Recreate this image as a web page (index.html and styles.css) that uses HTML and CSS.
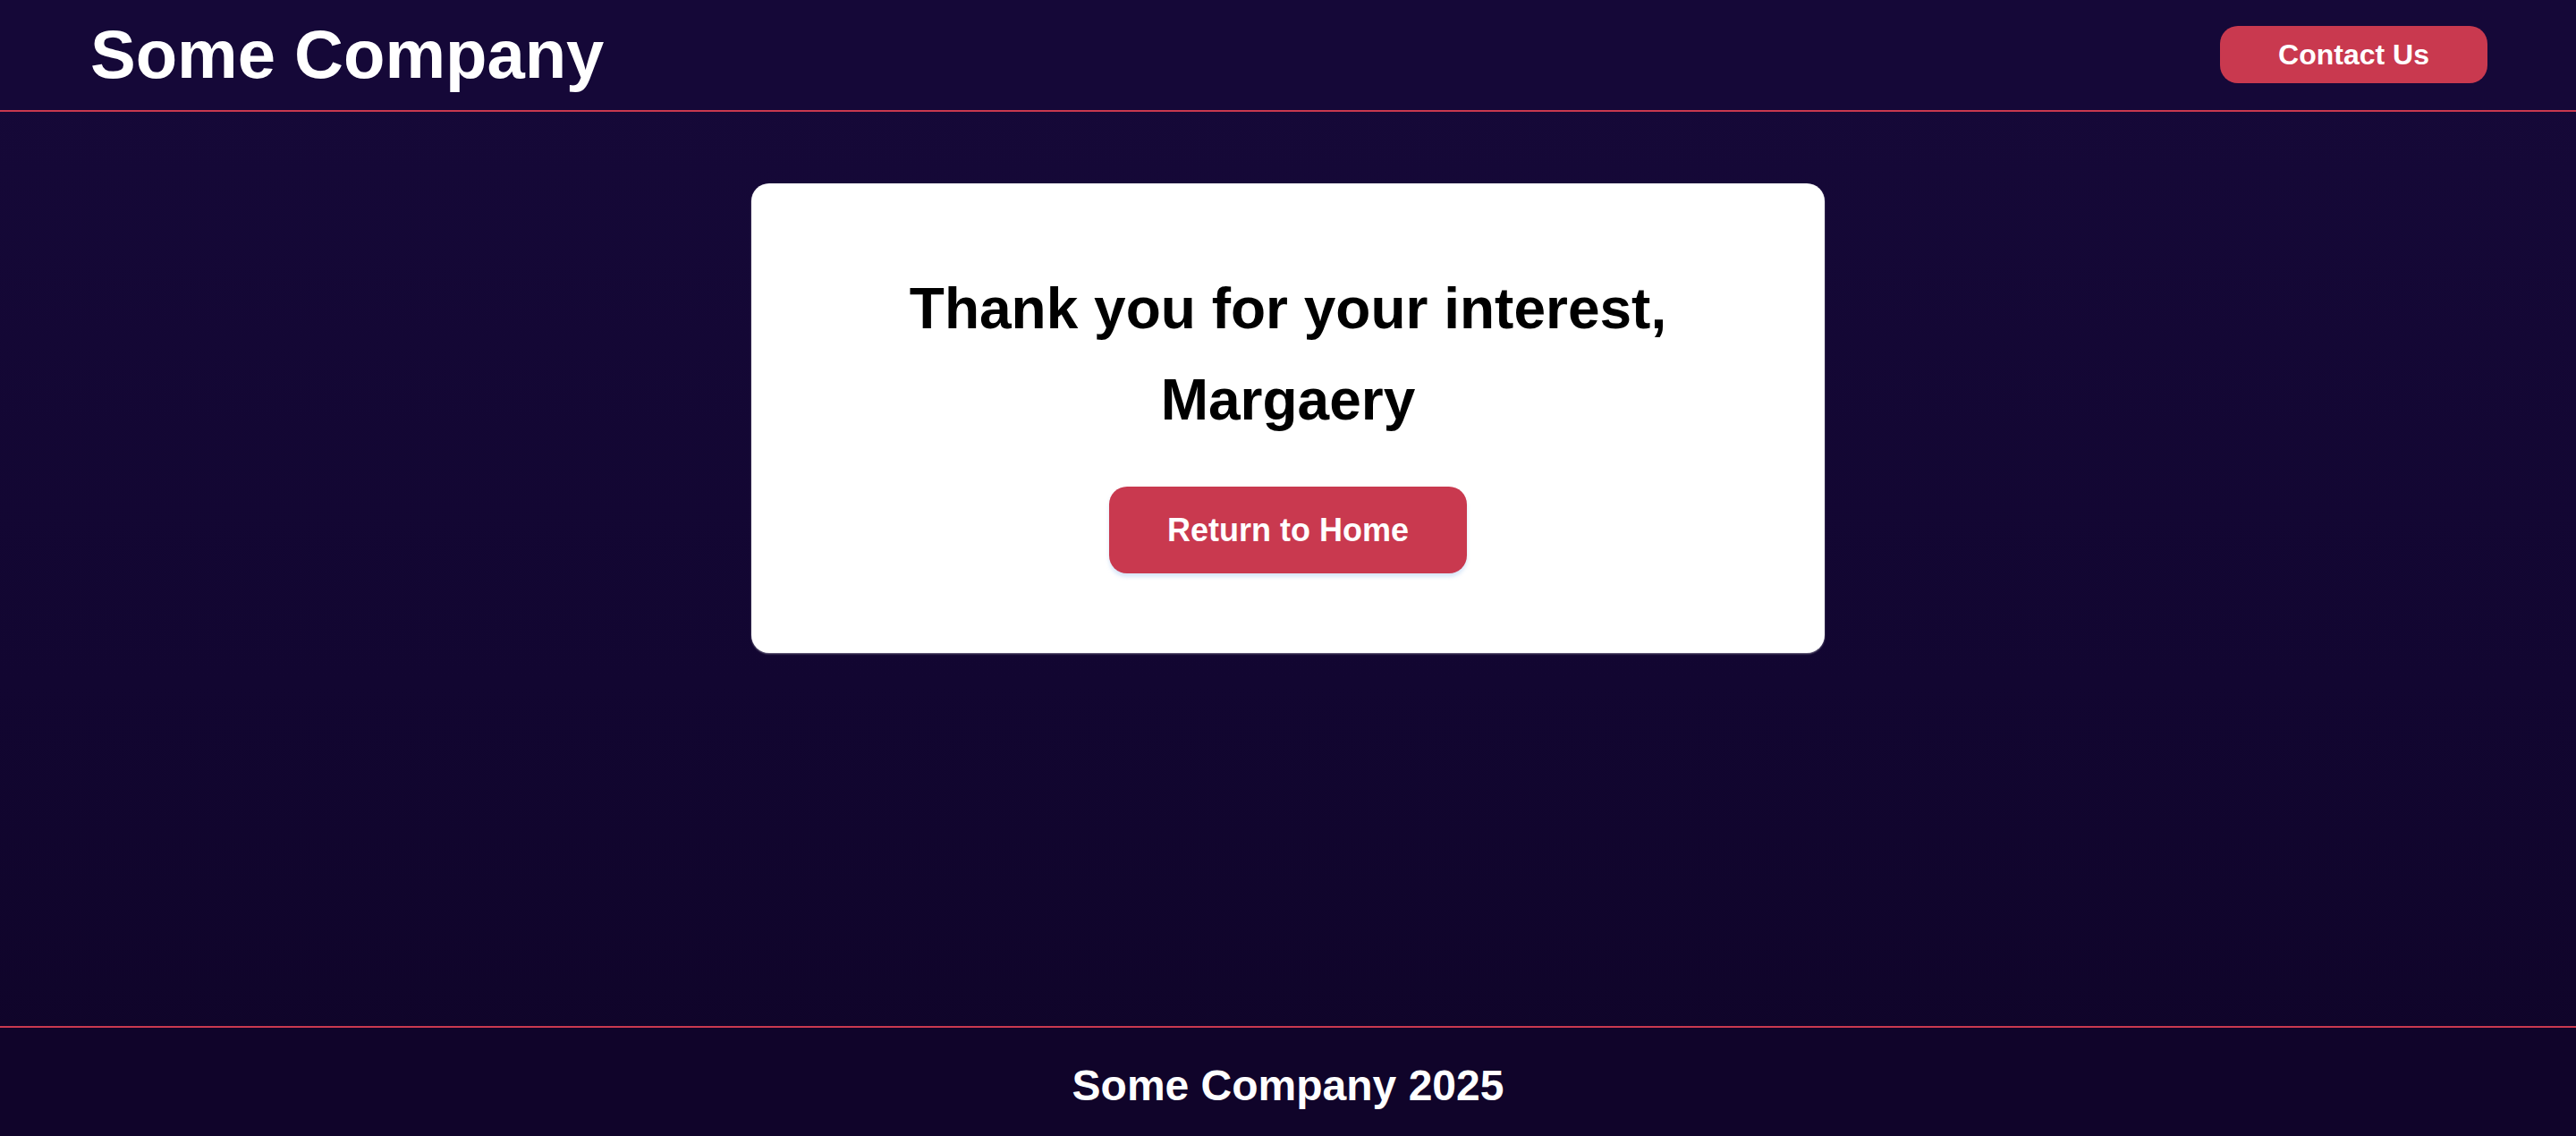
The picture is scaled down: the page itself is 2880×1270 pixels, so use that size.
FILE: index.html
```html
<!DOCTYPE html>
<html lang="en">
<head>
<meta charset="utf-8">
<title>Thank You - Some Company</title>
<link rel="stylesheet" href="styles.css">
</head>
<body>
  <div class="page">
    <header class="site-header">
      <div class="logo">Some Company</div>
      <a class="btn btn-contact" href="#">Contact Us</a>
    </header>
    <main class="main">
      <section class="card">
        <h1 class="card-title">Thank you for your interest, Margaery</h1>
        <a class="btn btn-home" href="#">Return to Home</a>
      </section>
    </main>
    <footer class="site-footer">
      <p class="footer-text">Some Company 2025</p>
    </footer>
  </div>
</body>
</html>
```

FILE: styles.css
```css
* {
  box-sizing: border-box;
}

html, body {
  margin: 0;
  padding: 0;
}

body {
  font-family: "Liberation Sans", Arial, sans-serif;
  color: #ffffff;
  background: linear-gradient(to bottom, #160939 0%, #120631 60%, #0f0428 100%);
}

.page {
  display: flex;
  flex-direction: column;
  height: 100vh;
  overflow: hidden;
}

.site-header {
  flex: 0 0 125px;
  display: flex;
  align-items: center;
  justify-content: space-between;
  padding: 0 99px 2px 101px;
  border-bottom: 2px solid #c9394f;
  background: #150838;
}

.logo {
  font-size: 76px;
  font-weight: 700;
  color: #ffffff;
  line-height: normal;
}

.btn {
  display: inline-block;
  background: #c9394f;
  color: #ffffff;
  font-weight: 700;
  text-decoration: none;
  text-align: center;
}

.btn-contact {
  font-size: 32px;
  padding: 13px 65px;
  border-radius: 20px;
  line-height: 38px;
}

.main {
  flex: 1 1 auto;
  display: flex;
  justify-content: center;
  align-items: flex-start;
  padding-top: 80px;
}

.card {
  width: 1200px;
  height: 525px;
  background: #ffffff;
  border-radius: 20px;
  padding: 89px 80px 0;
  display: flex;
  flex-direction: column;
  align-items: center;
  box-shadow: 0 1px 2px rgba(225, 225, 232, 0.5);
}

.card-title {
  margin: 0 0 45px;
  font-size: 64px;
  line-height: 1.6;
  font-weight: 700;
  color: #000000;
  text-align: center;
  max-width: 1000px;
}

.btn-home {
  font-size: 36px;
  line-height: 41px;
  padding: 28px 65px;
  border-radius: 20px;
  box-shadow: 0 4px 4px rgba(200, 220, 245, 0.7);
}

.site-footer {
  flex: 0 0 123px;
  border-top: 2px solid #c9394f;
  background: #10042a;
  padding: 37px 0 0;
  text-align: center;
}

.footer-text {
  margin: 0;
  font-size: 48px;
  font-weight: 700;
  line-height: 55px;
  color: #ffffff;
}
```
